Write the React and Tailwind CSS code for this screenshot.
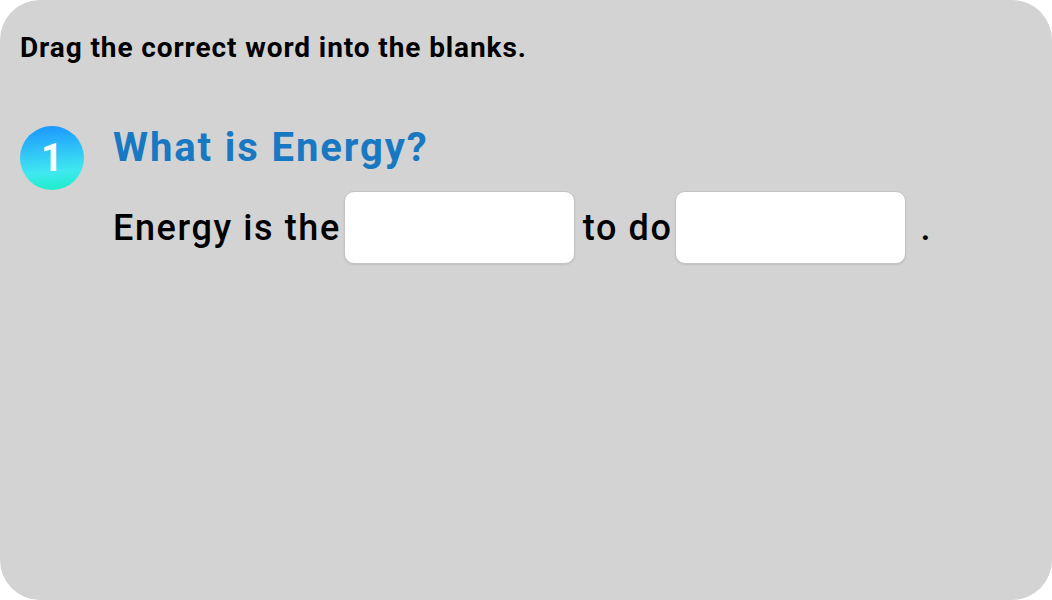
import React from "react";

export default function App() {
  return (
    <div className="w-[1052px] h-[600px] bg-white" style={{ fontFamily: "Roboto, 'Noto Sans', sans-serif" }}>
      <div className="w-full h-full bg-[#d3d3d3] rounded-[40px] pl-5 pt-[28px]">
        <h1 className="text-[28px] font-bold text-black leading-[40px] tracking-[0.9px]">Drag the correct word into the blanks.</h1>
        <div className="flex mt-[58px]">
          <div className="w-16 h-16 rounded-full bg-[linear-gradient(175deg,#1a94ff_0%,#40e8f0_70%,#18efc4_100%)] flex items-center justify-center shrink-0">
            <span className="text-white font-bold text-[38px] leading-none">1</span>
          </div>
          <div className="ml-[29px]">
            <div className="text-[#1878c2] font-bold text-[40px] tracking-[1.9px] leading-[44px]">What is Energy?</div>
            <div className="flex items-center mt-[21px] text-[36px] font-medium tracking-[1.6px] text-black">
              <span>Energy is the</span>
              <div className="w-[231px] h-[73px] bg-white rounded-[10px] border border-[#c4c4c4] shadow-[0_1px_2px_rgba(0,0,0,0.1)] ml-[3px] mr-[8px]"></div>
              <span>to do</span>
              <div className="w-[231px] h-[73px] bg-white rounded-[10px] border border-[#c4c4c4] shadow-[0_1px_2px_rgba(0,0,0,0.1)] ml-[3px] mr-[14px]"></div>
              <span>.</span>
            </div>
          </div>
        </div>
      </div>
    </div>
  );
}
